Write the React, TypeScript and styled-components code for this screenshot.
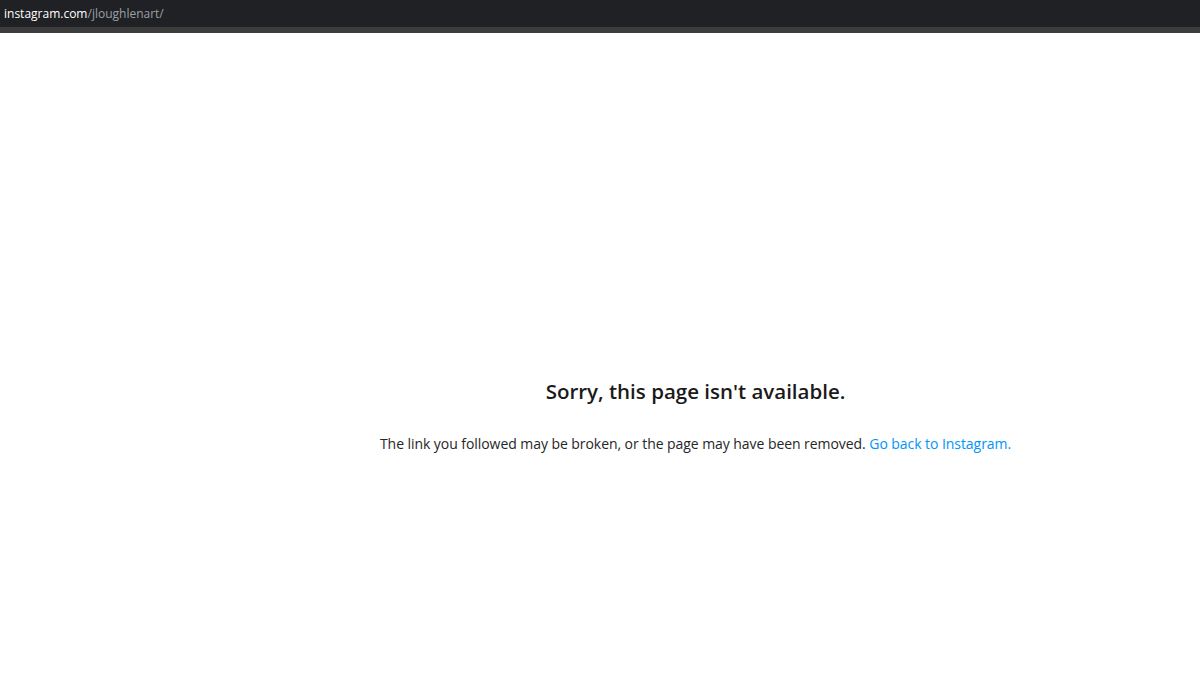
import React from 'react';
import styled, { createGlobalStyle } from 'styled-components';

const GlobalStyle = createGlobalStyle`
  html, body {
    margin: 0;
    padding: 0;
    background: #ffffff;
    font-family: 'Open Sans', 'Noto Sans', sans-serif;
  }
`;

const Page = styled.div`
  display: flex;
  flex-direction: column;
  height: 700px;
  overflow: hidden;
`;

const AddressBar = styled.div`
  display: flex;
  align-items: center;
  height: 27px;
  padding: 0 4px;
  background: #202124;
  font-size: 12px;
  line-height: 1;
`;

const Host = styled.span`
  color: #ffffff;
`;

const Path = styled.span`
  color: #9aa0a6;
`;

const Strip = styled.div`
  height: 6px;
  background: #3c3c3c;
`;

const Main = styled.main`
  flex: 1;
  display: flex;
  flex-direction: column;
  align-items: center;
  padding: 344px 0 0 191px;
  color: #262626;
`;

const Title = styled.h2`
  margin: 0;
  font-size: 20.5px;
  font-weight: 600;
  line-height: 28px;
  color: #1a1a1a;
`;

const Message = styled.div`
  margin-top: 30px;
  font-size: 14px;
  line-height: 18px;
  letter-spacing: -0.06px;
`;

const BackLink = styled.a`
  color: #0095f6;
  text-decoration: none;
`;

export default function App (): React.ReactElement {
  return (
    <>
      <GlobalStyle />
      <Page>
        <AddressBar>
          <Host>instagram.com</Host>
          <Path>/jloughlenart/</Path>
        </AddressBar>
        <Strip />
        <Main>
          <Title>Sorry, this page isn&apos;t available.</Title>
          <Message>
            The link you followed may be broken, or the page may have been removed.{' '}
            <BackLink href='#'>Go back to Instagram.</BackLink>
          </Message>
        </Main>
      </Page>
    </>
  );
}
